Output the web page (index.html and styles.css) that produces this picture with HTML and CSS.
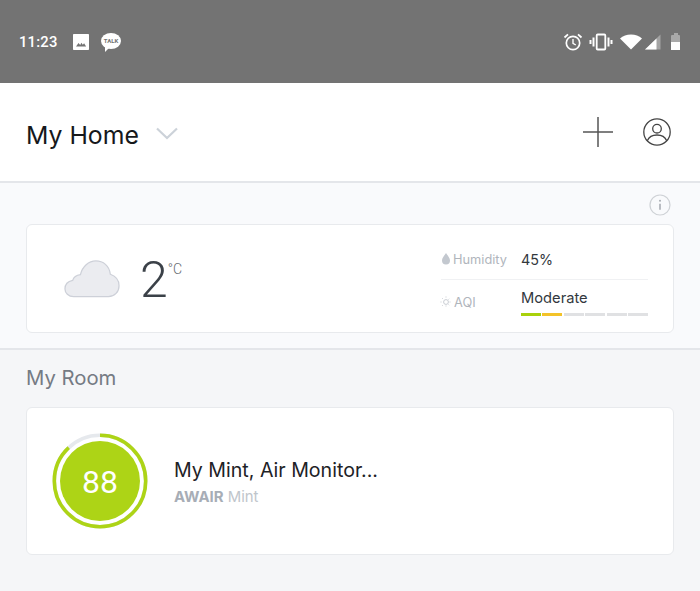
FILE: index.html
```html
<!DOCTYPE html>
<html lang="en">
<head>
<meta charset="utf-8">
<title>My Home</title>
<link rel="stylesheet" href="styles.css">
</head>
<body>
<div class="status">
  <span class="time">11:23</span>
  <svg class="st-img" width="16" height="16" viewBox="0 0 16 16"><path fill="#fff" d="M.8 0h14.400a.8.8 0 0 1 .8.8v14.400a.8.8 0 0 1-.8.8H.8a.8.8 0 0 1-.8-.8V.8A.8.8 0 0 1 .8 0z"/><path fill="#737373" d="M3 12.500l2.500-3.500 1.700 2 1.200-2.200 1.400 2 1.300-1.500 2 3.200z"/></svg>
  <span class="talk"><span class="talk-text">TALK</span><svg class="talk-tail" width="6" height="6" viewBox="0 0 6 6"><path fill="#fff" d="M1 0v6l5-5z"/></svg></span>
  <span class="st-right">
    <svg class="ic-alarm" width="20" height="20" viewBox="0 0 20 20" fill="none" stroke="#fff"><circle cx="10" cy="11" r="6.700" stroke-width="1.700"/><path stroke-width="1.400" d="M10 7v4.300l2.800 1.700"/><path stroke-width="1.800" d="M1.500 5.500L5 2.300M18.500 5.500L15 2.300"/></svg>
    <svg class="ic-vib" width="24" height="18" viewBox="0 0 24 18" fill="none" stroke="#fff"><rect x="7.700" y="1.500" width="8.600" height="15" rx="1" stroke-width="1.800"/><path stroke-width="2" d="M4.500 4.500v9M19.500 4.500v9M1.500 7v4M22.500 7v4"/></svg>
    <svg class="ic-wifi" width="22" height="16" viewBox="0 0 22 16"><path fill="#fff" d="M0 4.500C3 1.900 6.600.5 11 .5s8 1.400 11 4l-11 11z"/></svg>
    <svg class="ic-cell" width="17" height="16" viewBox="0 0 17 16"><path fill="#fff" opacity=".35" d="M16.500.5V15.500H1z"/><path fill="#fff" d="M12.500 4.500V15.500H1z"/></svg>
    <span class="battery"><span class="battery-fill"></span></span>
  </span>
</div>

<header class="head">
  <div class="place">
    <h1 class="place-name">My Home</h1>
    <svg class="chev" width="22" height="13" viewBox="0 0 22 13" fill="none" stroke="#ccd2d9" stroke-width="2.200"><path d="M1 1.500l10 9.500 10-9.500"/></svg>
  </div>
  <div class="head-actions">
    <svg width="30" height="30" viewBox="0 0 30 30" stroke="#555" stroke-width="1.500"><path d="M15 0v30M0 15h30"/></svg>
    <svg width="28" height="28" viewBox="0 0 28 28" fill="none" stroke="#444" stroke-width="1.300"><circle cx="14" cy="14" r="13.200"/><circle cx="14" cy="10.700" r="4.300"/><path d="M4.300 22.800c1.500-3.600 5-5.800 9.700-5.800s8.200 2.200 9.700 5.800"/></svg>
  </div>
</header>

<section class="outdoor">
  <div class="info-row">
    <svg width="22" height="22" viewBox="0 0 22 22" fill="none"><circle cx="11" cy="11" r="10" stroke="#cfd2d6" stroke-width="1.200"/><path stroke="#a9adb3" stroke-width="1.600" d="M11 9.800v6"/><circle cx="11" cy="6.800" r="1" fill="#a9adb3"/></svg>
  </div>
  <div class="card weather">
    <div class="temp-side">
      <svg class="cloud" width="56" height="38" viewBox="0 0 58 40" preserveAspectRatio="none"><path fill="#ebecf0" stroke="#cdd0d8" stroke-width="1.300" d="M10 38.500C4.500 38.500 1 34.500 1 30.500c0-4.700 3-8 8-9 1-3.500 3.500-5.500 8-6C19 7 25.500 1 33 1c7.500 0 14 5 15 14 5.500 2 9 6 9 12 0 6.500-4.500 11.500-11 11.500z"/></svg>
      <span class="temp">2</span><span class="unit">°C</span>
    </div>
    <div class="stats">
      <div class="stat humid">
        <span class="stat-label"><svg width="8" height="12" viewBox="0 0 8 12"><path fill="#c3c8cf" d="M4 0c1.500 2.500 4 4.800 4 7.500a4 4 0 0 1-8 0C0 4.800 2.500 2.500 4 0z"/></svg>Humidity</span>
        <span class="stat-value">45%</span>
      </div>
      <div class="stat aqi">
        <span class="stat-label"><svg width="12" height="12" viewBox="0 0 12 12" fill="none" stroke="#c9cdd3"><circle cx="6" cy="6" r="2.400"/><path stroke-dasharray="1 1.500" d="M6 .5v2M6 9.500v2M.5 6h2M9.500 6h2M2.100 2.100l1.400 1.400M8.500 8.500l1.400 1.400M2.100 9.900l1.400-1.400M8.500 3.500l1.400-1.400"/></svg>AQI</span>
        <div class="aqi-value">
          <span class="stat-value">Moderate</span>
          <div class="scale"><i class="seg seg-green"></i><i class="seg seg-yellow"></i><i class="seg"></i><i class="seg"></i><i class="seg"></i><i class="seg"></i></div>
        </div>
      </div>
    </div>
  </div>
</section>

<section class="room">
  <h2 class="room-title">My Room</h2>
  <div class="card device">
    <div class="score">
      <svg class="ring" width="96" height="96" viewBox="0 0 96 96" fill="none" stroke-width="3.600"><circle cx="48" cy="48" r="45.700" stroke="#e6e9ed"/><circle cx="48" cy="48" r="45.700" stroke="#add416" pathLength="100" stroke-dasharray="88 12" transform="rotate(-90 48 48)"/></svg>
      <span class="score-num">88</span>
    </div>
    <div class="device-text">
      <div class="device-name">My Mint, Air Monitor...</div>
      <div class="device-model"><b>AWAIR</b> Mint</div>
    </div>
  </div>
</section>
</body>
</html>
```
FILE: styles.css
```css
* { box-sizing: border-box; }
html, body { margin: 0; height: 100%; }
body { width: 700px; height: 591px; overflow: hidden; background: #f5f6f8; font-family: Inter, Roboto, sans-serif; display: flex; flex-direction: column; }

.status { height: 83px; flex: none; background: #737373; color: #fff; display: flex; align-items: center; padding: 0 20px 0 19px; font-family: Roboto, sans-serif; }
.time { font-size: 14.800px; font-weight: 500; letter-spacing: .2px; width: 54px; }
.st-img { margin-right: 12px; }
.talk { position: relative; width: 20px; height: 16px; border-radius: 50%; background: #fff; display: flex; align-items: center; justify-content: center; margin-top: -2px; }
.talk-text { font-size: 6px; font-weight: 700; color: #737373; line-height: 1; }
.talk-tail { position: absolute; left: 3px; top: 13px; }
.st-right { margin-left: auto; display: flex; align-items: center; }
.ic-vib { margin-left: 6px; }
.ic-wifi { margin-left: 7px; }
.ic-cell { margin-left: 2px; }
.battery { position: relative; display: block; width: 9px; height: 15px; margin-left: 10px; margin-top: 2px; background: #a9a9a9; border-radius: 1px; }
.battery::before { content: ""; position: absolute; left: 2.500px; top: -2px; width: 4px; height: 2px; background: #a9a9a9; }
.battery-fill { position: absolute; left: 0; right: 0; bottom: 0; height: 8px; background: #fff; }

.head { height: 100px; flex: none; background: #fff; border-bottom: 2px solid #e4e6ea; display: flex; align-items: center; justify-content: space-between; padding: 0 29px 1px 26px; }
.place { display: flex; align-items: center; gap: 17px; padding-top: 6px; }
.place-name { margin: 0; font-size: 24.800px; font-weight: 400; color: #16181b; }
.chev { margin-top: -3px; }
.head-actions { display: flex; align-items: center; gap: 30px; }

.outdoor { height: 167px; flex: none; background: #f9fafc; border-bottom: 2px solid #e4e6ea; padding: 0 26px; }
.info-row { height: 41px; display: flex; justify-content: flex-end; padding: 11px 3px 0 0; }
.card { background: #fff; border: 1px solid #e8eaed; border-radius: 6px; }
.weather { height: 109px; display: flex; align-items: center; justify-content: space-between; padding: 0 25px 0 37px; }
.temp-side { display: flex; align-items: flex-start; padding-top: 3px; }
.cloud { margin-top: 9px; }
.temp { font-family: Roboto, sans-serif; font-size: 50px; font-weight: 300; line-height: 58px; color: #3b4148; margin-left: 20px; }
.unit { font-family: Roboto, sans-serif; font-size: 14px; font-weight: 300; color: #666b72; margin-top: 10px; }
.stats { width: 207px; }
.stat { display: flex; }
.humid { height: 39px; align-items: center; border-bottom: 1px solid #f0f1f3; padding-bottom: 2px; }
.humid .stat-label svg { margin-left: 1px; }
.aqi { padding-top: 9px; }
.stat-label { width: 80px; flex: none; font-size: 12.800px; color: #b0b5bc; display: flex; align-items: center; gap: 3px; }
.aqi .stat-label { height: 24px; gap: 2px; margin-left: -1px; margin-right: 1px; margin-top: 1px; }
.stat-value { font-size: 14.300px; color: #33383e; }
.aqi-value { flex: 1; }
.aqi .stat-value { display: block; font-size: 14.700px; line-height: 18px; }
.scale { display: flex; gap: 1.500px; margin-top: 6px; }
.seg { flex: 1; height: 3px; background: #e0e1e3; }
.seg-green { background: #a9d10b; }
.seg-yellow { background: #f3c329; }

.room { flex: 1; padding: 0 26px; }
.room-title { margin: 0; font-size: 20.300px; font-weight: 400; color: #757b84; height: 57px; line-height: 56px; }
.device { height: 148px; display: flex; align-items: center; padding: 0 25px 0 25px; }
.score { position: relative; width: 96px; height: 96px; display: flex; align-items: center; justify-content: center; flex: none; }
.ring { position: absolute; left: 0; top: 0; }
.score-num { width: 80px; height: 80px; padding-top: 1px; border-radius: 50%; background: #add416; color: #fff; font-family: Roboto, sans-serif; font-size: 32px; font-weight: 400; display: flex; align-items: center; justify-content: center; }
.device-text { margin-left: 26px; padding-top: 2px; }
.device-name { font-size: 19.600px; color: #1e2226; line-height: 26px; }
.device-model { font-size: 14.900px; color: #c0c5cb; line-height: 20px; margin-top: 4px; }
.device-model b { color: #a7adb6; font-weight: 700; }
```
